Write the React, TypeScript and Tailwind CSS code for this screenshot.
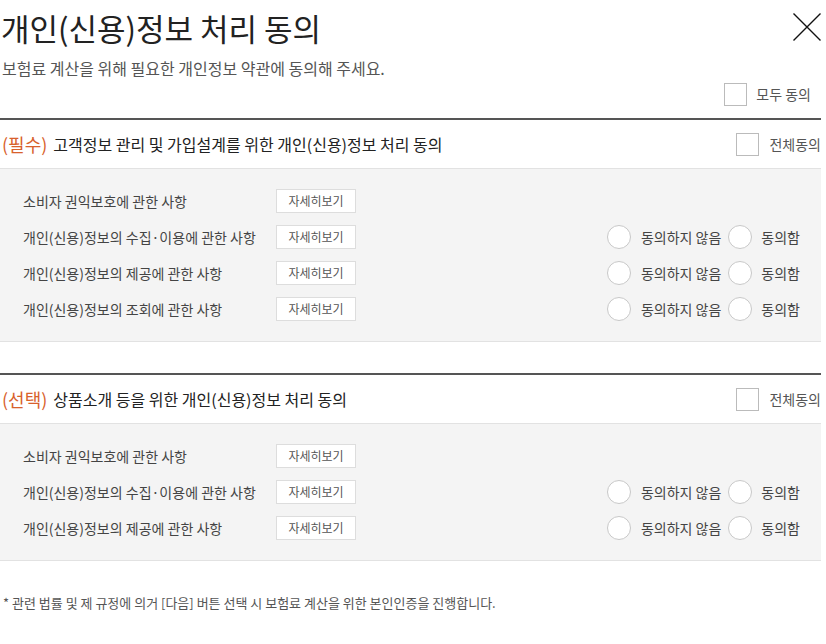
const font = { fontFamily: '"Noto Sans CJK KR", "Noto Sans", sans-serif' };

type Row = { label: string; radio: boolean };

const required: Row[] = [
  { label: '소비자 권익보호에 관한 사항', radio: false },
  { label: '개인(신용)정보의 수집·이용에 관한 사항', radio: true },
  { label: '개인(신용)정보의 제공에 관한 사항', radio: true },
  { label: '개인(신용)정보의 조회에 관한 사항', radio: true },
];

const optional: Row[] = [
  { label: '소비자 권익보호에 관한 사항', radio: false },
  { label: '개인(신용)정보의 수집·이용에 관한 사항', radio: true },
  { label: '개인(신용)정보의 제공에 관한 사항', radio: true },
];

function Checkbox() {
  return <span className="block w-[23px] h-[23px] border border-[#bbb] bg-white" />;
}

function Radio() {
  return <span className="block w-[24px] h-[24px] rounded-full border border-[#c8c8c8] bg-white" />;
}

function AgreeRow({ row }: { row: Row }) {
  return (
    <div className="flex items-center h-[36px] pl-[23px] pr-[21px]">
      <span className="w-[253px] text-[14px] text-[#444]">{row.label}</span>
      <button className="w-[80px] h-[24px] border border-[#ddd] bg-white text-[12px] text-[#555]">
        자세히보기
      </button>
      {row.radio && (
        <div className="ml-auto flex items-center text-[14px] text-[#444]">
          <Radio />
          <span className="ml-[10px]">동의하지 않음</span>
          <span className="ml-[7px]">
            <Radio />
          </span>
          <span className="ml-[9px]">동의함</span>
        </div>
      )}
    </div>
  );
}

function Section({ tag, title, rows }: { tag: string; title: string; rows: Row[] }) {
  return (
    <div className="border-t-2 border-[#555]">
      <div className="flex items-center justify-between h-[48px]">
        <h2 className="flex items-center gap-[6px] pl-[2px] text-[16px] text-[#222]">
          <span className="text-[18px] text-[#d8612c]">({tag})</span>
          <span>{title}</span>
        </h2>
        <label className="flex items-center gap-[10px] text-[14px] text-[#555]">
          <Checkbox />
          전체동의
        </label>
      </div>
      <div className="bg-[#f4f4f4] border-y border-[#e2e2e2] pt-[14px] pb-[14px]">
        {rows.map((r, i) => (
          <AgreeRow key={i} row={r} />
        ))}
      </div>
    </div>
  );
}

export default function App() {
  return (
    <div className="w-[826px] h-[644px] bg-white" style={font}>
      <div className="w-[821px]">
        <div className="flex items-center justify-between h-[56px]">
          <h1 className="pl-[1px] text-[31px] text-[#222]">개인(신용)정보 처리 동의</h1>
          <svg width="28" height="28" viewBox="0 0 28 28" className="mt-[-2px]">
            <path d="M0.5 0.5 L27.5 27.5 M27.5 0.5 L0.5 27.5" stroke="#111" strokeWidth="1.4" />
          </svg>
        </div>
        <p className="pl-[2px] text-[16px] leading-[24px] text-[#555]">
          보험료 계산을 위해 필요한 개인정보 약관에 동의해 주세요.
        </p>
        <div className="flex justify-end items-center gap-[9px] pr-[10px] mt-[3px] mb-[12px] text-[14px] text-[#555]">
          <Checkbox />
          <span>모두 동의</span>
        </div>
        <Section tag="필수" title="고객정보 관리 및 가입설계를 위한 개인(신용)정보 처리 동의" rows={required} />
        <div className="h-[31px]" />
        <Section tag="선택" title="상품소개 등을 위한 개인(신용)정보 처리 동의" rows={optional} />
        <p className="mt-[32px] pl-[3px] text-[13px] leading-[20px] text-[#555]">
          * 관련 법률 및 제 규정에 의거 [다음] 버튼 선택 시 보험료 계산을 위한 본인인증을 진행합니다.
        </p>
      </div>
    </div>
  );
}
